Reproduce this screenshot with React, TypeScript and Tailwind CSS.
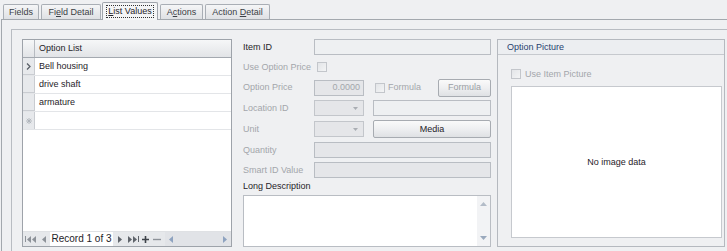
import React from "react";

// tab strip entries, widths taken from the shot
const tabs = [
  { label: "Fields", w: "w-[36px]", ml: "ml-0" },
  { label: "Field Detail", w: "w-[60px]", ml: "ml-[2px]", u: 2 },
  { label: "List Values", w: "w-[56px]", ml: "ml-[1px]", u: 0, active: true },
  { label: "Actions", w: "w-[43px]", ml: "ml-[2px]", u: 1 },
  { label: "Action Detail", w: "w-[65px]", ml: "ml-[2px]", u: 7 },
];

const rows = ["Bell housing", "drive shaft", "armature"];

const Mnemonic = ({ text, u }: { text: string; u?: number }) => {
  if (u === undefined) return <span>{text}</span>;
  return (
    <span className="whitespace-pre">
      {text.slice(0, u)}
      <span className="underline underline-offset-1">{text[u]}</span>
      {text.slice(u + 1)}
    </span>
  );
};

const TabStrip = () => (
  <div className="relative z-10 flex h-[19px] items-end pl-[3px]">
    {tabs.map((t) =>
      t.active ? (
        <div
          key={t.label}
          className={`${t.w} ${t.ml} -mb-px flex h-[18px] items-center justify-center rounded-t-[2px] border-x border-t border-[#9fa4ab] bg-[#f4f5f6]`}
        >
          <span className="border border-dotted border-[#333] px-[1px] leading-[11px]">
            <Mnemonic text={t.label} u={t.u} />
          </span>
        </div>
      ) : (
        <div
          key={t.label}
          className={`${t.w} ${t.ml} flex h-[15px] items-center justify-center rounded-t-[2px] border-x border-t border-[#a9aeb5] bg-gradient-to-b from-[#f5f6f7] to-[#dfe1e4] text-[#3b3f45]`}
        >
          <Mnemonic text={t.label} u={t.u} />
        </div>
      )
    )}
  </div>
);

const Tri = ({ dir }: { dir: "l" | "r" }) => (
  <svg width="4" height="7" viewBox="0 0 4 7">
    <path d={dir === "l" ? "M4 0 L0 3.5 L4 7 Z" : "M0 0 L4 3.5 L0 7 Z"} fill="currentColor" />
  </svg>
);

const Navigator = () => (
  <div className="flex h-[15px] items-stretch border-t border-[#dfe1e4] bg-[#e6e8eb] text-[#8d9299]">
    <div className="flex w-[14px] items-center justify-center gap-[1px]">
      <span className="h-[6px] w-px bg-current" />
      <Tri dir="l" />
      <Tri dir="l" />
    </div>
    <div className="flex w-[13px] items-center justify-center">
      <Tri dir="l" />
    </div>
    <div className="flex w-[63px] items-center justify-center bg-white text-[10px] text-[#1f2329]">
      Record 1 of 3
    </div>
    <div className="flex w-[14px] items-center justify-center text-[#5f646b]">
      <Tri dir="r" />
    </div>
    <div className="flex w-[12px] items-center justify-center gap-[1px] text-[#5f646b]">
      <Tri dir="r" />
      <Tri dir="r" />
      <span className="h-[6px] w-px bg-current" />
    </div>
    <div className="flex w-[12px] items-center justify-center">
      <svg width="7" height="7" viewBox="0 0 7 7">
        <path d="M3.5 0 V7 M0 3.5 H7" stroke="#3d4249" strokeWidth="1.6" />
      </svg>
    </div>
    <div className="flex w-[12px] items-center justify-center">
      <svg width="8" height="7" viewBox="0 0 8 7">
        <path d="M0 3.5 H8" stroke="#8d9299" strokeWidth="1.4" />
      </svg>
    </div>
    <div className="ml-[2px] flex flex-1 items-center justify-between bg-[#e1e3e7] px-[4px] text-[#8ea3c0]">
      <Tri dir="l" />
      <Tri dir="r" />
    </div>
  </div>
);

const Grid = () => (
  <div className="flex h-[208px] w-[210px] flex-col border border-[#9ea3aa] bg-white">
    <div className="flex h-[18px] border-b border-[#a4a9b0] bg-gradient-to-b from-[#f6f7f8] to-[#e2e4e7]">
      <div className="w-[12px] border-r border-[#b7bbc1]" />
      <div className="flex items-center pl-[4px] text-[#1f2329]">Option List</div>
    </div>
    {rows.map((r, i) => (
      <div key={r} className="flex h-[18px] border-b border-[#e3e5e8]">
        <div className="flex w-[12px] items-center justify-center border-r border-b border-[#c9ccd1] bg-[#e7e9ec]">
          {i === 0 && (
            <svg width="5" height="7" viewBox="0 0 5 7">
              <path d="M1 0.5 L4 3.5 L1 6.5" fill="none" stroke="#5b6068" strokeWidth="1.3" />
            </svg>
          )}
        </div>
        <div className="flex items-center pl-[4px]">{r}</div>
      </div>
    ))}
    <div className="flex h-[18px] border-b border-[#e3e5e8]">
      <div className="flex w-[12px] items-center justify-center border-r border-[#c9ccd1] bg-[#e7e9ec]">
        <svg width="6" height="6" viewBox="0 0 6 6">
          <path d="M3 0 V6 M0 3 H6 M0.8 0.8 L5.2 5.2 M5.2 0.8 L0.8 5.2" stroke="#aeb3ba" strokeWidth="0.9" />
        </svg>
      </div>
    </div>
    <div className="flex-1" />
    <Navigator />
  </div>
);

const Box = ({ w, dim, children }: { w: string; dim?: boolean; children?: React.ReactNode }) => (
  <div
    className={`${w} flex h-[16px] items-center justify-end border border-[#b9bdc3] pr-[3px] ${
      dim ? "bg-[#e5e6e9] text-[#a3a6ab]" : "bg-[#eef0f2]"
    }`}
  >
    {children}
  </div>
);

const Combo = () => (
  <div className="flex h-[16px] w-[50px] items-center justify-end border border-[#c3c6cb] bg-[#e5e6e9] pr-[5px]">
    <svg width="5" height="3" viewBox="0 0 5 3">
      <path d="M0 0 H5 L2.5 3 Z" fill="#a9adb3" />
    </svg>
  </div>
);

const Check = () => (
  <div className="h-[10px] w-[10px] border border-[#c3c6cb] bg-gradient-to-br from-[#e3e5e8] to-[#f3f4f5]" />
);

const Btn = ({ w, dim, children }: { w: string; dim?: boolean; children: React.ReactNode }) => (
  <div
    className={`${w} flex h-[18px] items-center justify-center rounded-[2px] border border-[#a7abb1] bg-gradient-to-b from-[#fafafa] via-[#eeeff1] to-[#dfe1e4] ${
      dim ? "text-[#9a9ea4]" : "text-[#1f2329]"
    }`}
  >
    {children}
  </div>
);

const Label = ({ dim, children }: { dim?: boolean; children: React.ReactNode }) => (
  <div className={`w-[71px] shrink-0 ${dim ? "text-[#a3a6ab]" : "text-[#1f2329]"}`}>{children}</div>
);

const Details = () => (
  <div className="ml-[11px] flex w-[248px] flex-col">
    <div className="flex h-[16px] items-center">
      <Label>Item ID</Label>
      <Box w="w-[177px]" />
    </div>
    <div className="mt-[4px] flex h-[16px] items-center">
      <Label dim>Use Option Price</Label>
      <div className="ml-[3px]">
        <Check />
      </div>
    </div>
    <div className="mt-[4px] flex h-[17px] items-center">
      <Label dim>Option Price</Label>
      <Box w="w-[50px]" dim>
        0.0000
      </Box>
      <div className="ml-[11px]">
        <Check />
      </div>
      <span className="ml-[3px] text-[#a3a6ab]">Formula</span>
      <div className="ml-auto">
        <Btn w="w-[53px]" dim>
          Formula
        </Btn>
      </div>
    </div>
    <div className="mt-[4px] flex h-[16px] items-center">
      <Label dim>Location ID</Label>
      <Combo />
      <div className="ml-[9px]">
        <Box w="w-[118px]" />
      </div>
    </div>
    <div className="mt-[4px] flex h-[18px] items-center">
      <Label dim>Unit</Label>
      <Combo />
      <div className="ml-[9px]">
        <Btn w="w-[118px]">Media</Btn>
      </div>
    </div>
    <div className="mt-[4px] flex h-[16px] items-center">
      <Label dim>Quantity</Label>
      <Box w="w-[177px]" dim />
    </div>
    <div className="mt-[4px] flex h-[16px] items-center">
      <Label dim>Smart ID Value</Label>
      <Box w="w-[177px]" dim />
    </div>
    <div className="flex h-[17px] items-center">Long Description</div>
    <div className="flex h-[52px] border border-[#b9bdc3] bg-white">
      <div className="flex-1" />
      <div className="flex w-[13px] flex-col items-center justify-between bg-[#f2f3f5] py-[6px]">
        <svg width="7" height="4" viewBox="0 0 7 4">
          <path d="M0 4 L3.5 0 L7 4 Z" fill="#b3bcc8" />
        </svg>
        <svg width="7" height="4" viewBox="0 0 7 4">
          <path d="M0 0 L3.5 4 L7 0 Z" fill="#9aa9bd" />
        </svg>
      </div>
    </div>
  </div>
);

const Picture = () => (
  <div className="ml-[6px] flex h-[208px] w-[228px] flex-col border border-[#b5b9bf]">
    <div className="flex h-[15px] items-center border-b border-[#c6c9ce] bg-[#eceef1] pl-[9px] text-[#27416f]">
      Option Picture
    </div>
    <div className="mt-[13px] flex h-[12px] items-center pl-[13px] text-[#a3a6ab]">
      <Check />
      <span className="ml-[4px]">Use Item Picture</span>
    </div>
    <div className="ml-[13px] mt-[6px] flex h-[152px] w-[211px] items-center justify-center border border-[#c6c9ce] bg-white text-[#1f2329]">
      No image data
    </div>
  </div>
);

export default function App() {
  return (
    <div className="h-[251px] w-[727px] overflow-hidden bg-[#eff0f2] font-['Liberation_Sans',Arial,sans-serif] text-[9px] leading-none text-[#1f2329]">
      <TabStrip />
      <div className="ml-[1px] h-[240px] border-l border-t border-[#a3a8ae] pl-[9px] pt-[9px]">
        <div className="flex h-[240px] border-l border-t border-[#b8bcc2] pl-[10px] pt-[9px]">
          <Grid />
          <Details />
          <Picture />
        </div>
      </div>
    </div>
  );
}
